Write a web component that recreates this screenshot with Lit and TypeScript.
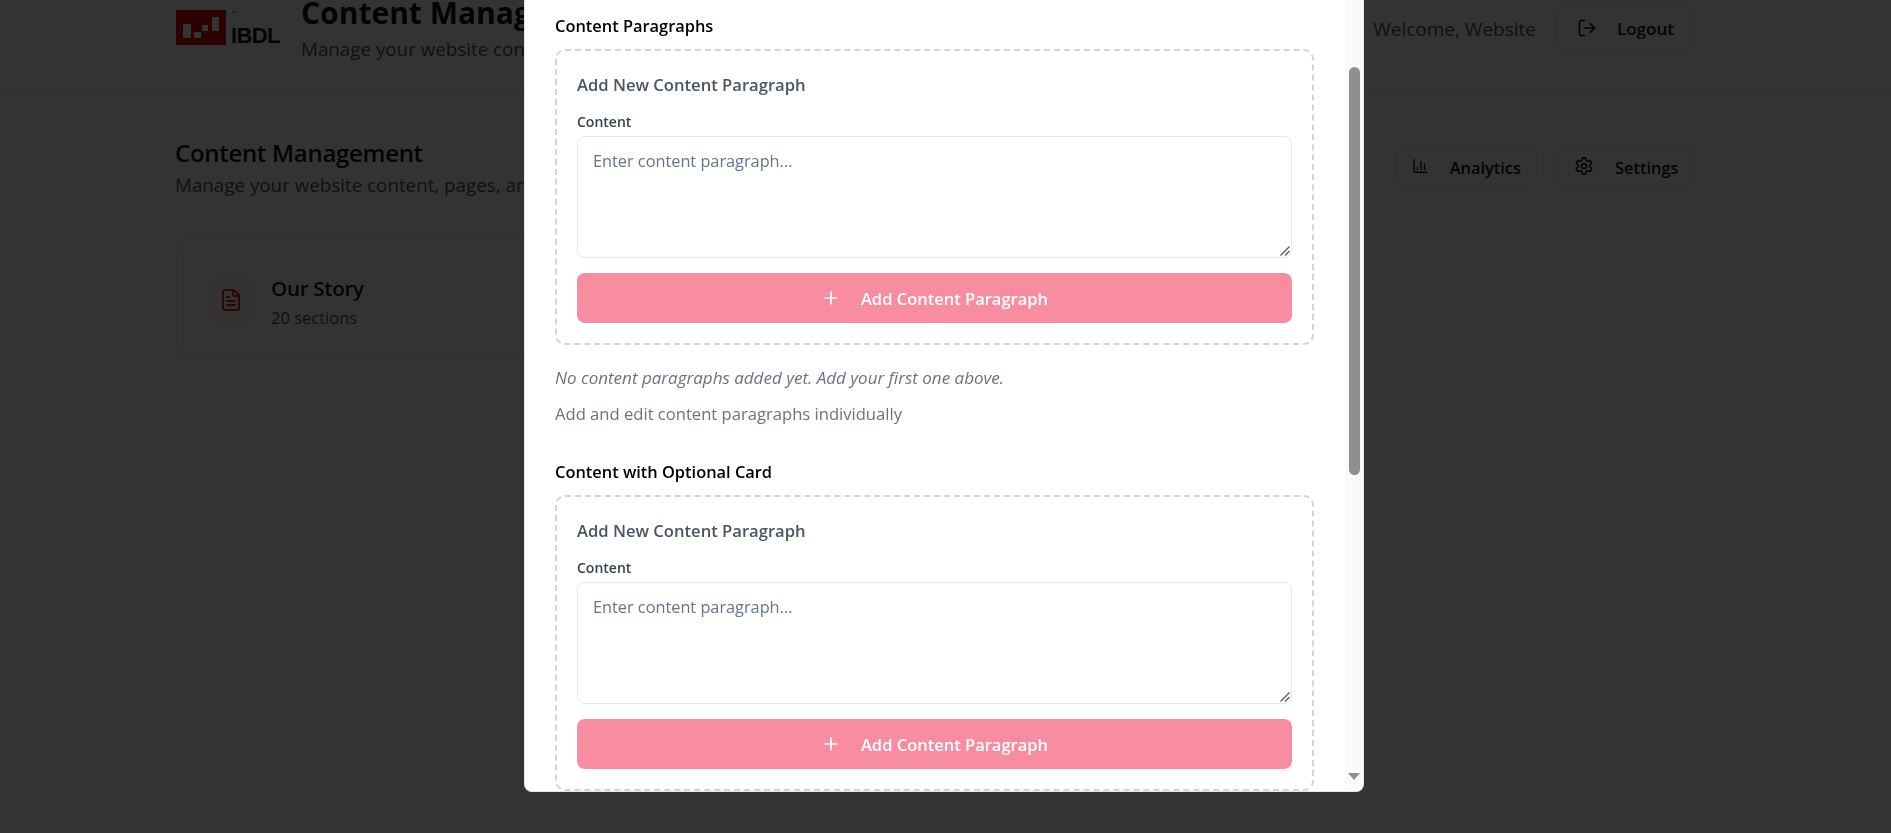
import { LitElement, html, css, svg } from 'lit';
import { customElement } from 'lit/decorators.js';

const icon = (body: unknown, size = 20) => html`<svg
  width=${size} height=${size} viewBox="0 0 24 24" fill="none" stroke="currentColor"
  stroke-width="2" stroke-linecap="round" stroke-linejoin="round">${body}</svg>`;

const logoutIcon = svg`<path d="M9 21H5a2 2 0 0 1-2-2V5a2 2 0 0 1 2-2h4"/><path d="M16 17l5-5-5-5"/><path d="M21 12H9"/>`;
const chartIcon = svg`<path d="M3 3v16a2 2 0 0 0 2 2h16"/><path d="M18 17V9"/><path d="M13 17V5"/><path d="M8 17v-3"/>`;
const gearIcon = svg`<path d="M12.22 2h-.44a2 2 0 0 0-2 2v.18a2 2 0 0 1-1 1.73l-.43.25a2 2 0 0 1-2 0l-.15-.08a2 2 0 0 0-2.73.73l-.22.38a2 2 0 0 0 .73 2.73l.15.1a2 2 0 0 1 1 1.72v.51a2 2 0 0 1-1 1.74l-.15.09a2 2 0 0 0-.73 2.73l.22.38a2 2 0 0 0 2.73.73l.15-.08a2 2 0 0 1 2 0l.43.25a2 2 0 0 1 1 1.73V20a2 2 0 0 0 2 2h.44a2 2 0 0 0 2-2v-.18a2 2 0 0 1 1-1.73l.43-.25a2 2 0 0 1 2 0l.15.08a2 2 0 0 0 2.73-.73l.22-.39a2 2 0 0 0-.73-2.73l-.15-.08a2 2 0 0 1-1-1.74v-.5a2 2 0 0 1 1-1.74l.15-.09a2 2 0 0 0 .73-2.73l-.22-.38a2 2 0 0 0-2.73-.73l-.15.08a2 2 0 0 1-2 0l-.43-.25a2 2 0 0 1-1-1.73V4a2 2 0 0 0-2-2z"/><circle cx="12" cy="12" r="3"/>`;
const fileIcon = svg`<path d="M15 2H6a2 2 0 0 0-2 2v16a2 2 0 0 0 2 2h12a2 2 0 0 0 2-2V7z"/><path d="M14 2v4a2 2 0 0 0 2 2h4"/><path d="M10 9H8"/><path d="M16 13H8"/><path d="M16 17H8"/>`;
const plusIcon = svg`<path d="M5 12h14"/><path d="M12 5v14"/>`;

@customElement('app-root')
export class AppRoot extends LitElement {
  static styles = css`
    :host {
      display: block;
      height: 833px;
      overflow: hidden;
      background: #fff;
      font-family: 'Open Sans', 'Noto Sans', sans-serif;
      color: #0f172a;
    }
    button { font: inherit; }

    /* page behind the dialog */
    .TopBar {
      height: 93px;
      box-sizing: border-box;
      border-bottom: 1px solid #e5e7eb;
      padding: 0 196px 0 176px;
      display: flex;
      justify-content: space-between;
      align-items: flex-start;
    }
    .brand { display: flex; gap: 21px; }
    .logo { display: flex; gap: 5px; margin-top: 10px; }
    .logoMark { display: block; }
    .logoWord { display: flex; flex-direction: column; justify-content: space-between; height: 37px; width: 49px; }
    .tm { font-size: 6px; line-height: 8px; margin-top: -1px; margin-left: 1px; color: #555; }
    .ibdl { font-size: 22px; line-height: 22px; font-weight: 700; letter-spacing: -0.6px; white-space: nowrap; font-family: 'Liberation Sans', sans-serif; }
    .titles { margin-top: -7px; }
    h1 { margin: 0; font-size: 30px; line-height: 40px; font-weight: 700; white-space: nowrap; }
    .sub { font-size: 18.8px; line-height: 28px; margin-top: 2px; color: #475569; white-space: nowrap; }
    .userBox { display: flex; align-items: center; gap: 20px; margin-top: 3px; }
    .welcome { font-size: 19px; padding-top: 2px; color: #475569; }
    .ghost {
      display: flex; align-items: center; gap: 21px;
      background: #fff; border: 1px solid #e5e7eb; border-radius: 10px;
      color: #0f172a; font-size: 16.4px; font-weight: 600; padding: 0 15px;
    }
    .ghost span { padding-top: 2px; }
    .logout { height: 49px; width: 139px; padding-left: 20px; gap: 20px; font-size: 17px; }
    .Main { padding: 44px 196px 0 175px; }
    .mainHead { display: flex; justify-content: space-between; align-items: flex-start; }
    h2 { margin: 0; font-size: 24px; line-height: 32px; font-weight: 600; letter-spacing: -0.3px; white-space: nowrap; }
    .mainSub { font-size: 18.8px; line-height: 28px; margin-top: 2px; color: #475569; white-space: nowrap; }
    .tools { display: flex; gap: 21px; margin-top: 7px; }
    .tools .ghost { height: 44px; }
    .tools .analytics { width: 141px; }
    .tools .settings { width: 137px; }
    .Card {
      margin-top: 40px; margin-left: 1px;
      width: 490px; height: 121px; box-sizing: border-box;
      border: 1px solid #e5e7eb; border-radius: 12px;
      display: flex; align-items: center; gap: 16px; padding-left: 30px;
    }
    .cardIcon {
      width: 48px; height: 48px; border-radius: 12px; background: #fef2f2;
      color: #dc2626; display: flex; align-items: center; justify-content: center;
    }
    .cardText { padding-top: 5px; }
    .cardTitle { font-size: 20.6px; line-height: 28px; font-weight: 600; letter-spacing: -0.3px; }
    .cardSub { font-size: 16.5px; line-height: 24px; margin-top: 4px; color: #475569; }

    /* dialog */
    .Overlay {
      position: fixed; inset: 0;
      background: rgba(0, 0, 0, 0.8);
    }
    .Dialog {
      position: absolute; left: 524px; top: 0;
      width: 840px; height: 792px; box-sizing: border-box;
      background: #fff;
      border: 1px solid #e5e7eb; border-top: 0;
      border-radius: 0 0 8px 8px;
      display: flex;
      overflow: hidden;
    }
    .body { flex: 1; padding: 0 31px 0 30px; min-width: 0; }
    .fieldTitle { font-size: 16.4px; line-height: 24px; font-weight: 600; color: #000; margin: 14px 0 11px; }
    .fieldTitle.next { margin-top: 34px; }
    .dashed {
      border: 2px dashed #d1d5db; border-radius: 10px;
      padding: 20px; height: 296px; box-sizing: border-box;
    }
    .addTitle { font-size: 16.6px; line-height: 28px; font-weight: 600; color: #4b5563; }
    .label { font-size: 14px; line-height: 20px; font-weight: 600; color: #374151; margin-top: 13px; }
    .areaWrap { position: relative; margin-top: 4px; }
    .area {
      display: block; width: 100%; height: 122px; box-sizing: border-box;
      padding: 12px 15px; resize: none;
      border: 1px solid #e2e8f0; border-radius: 8px; outline: none;
      font: 16.3px/24px 'Open Sans', 'Noto Sans', sans-serif;
      background: #fff;
    }
    .area::placeholder { color: #64748b; opacity: 1; }
    .grip { position: absolute; right: 2px; bottom: 2px; display: block; }
    .add {
      margin-top: 15px; width: 100%; height: 50px;
      border: 0; border-radius: 8px; background: #f88ca1; color: #fff;
      font-size: 16.5px; font-weight: 600;
      display: flex; align-items: center; justify-content: center; gap: 20px;
    }
    .empty { margin-top: 21px; font-size: 17px; line-height: 24px; font-style: italic; color: #6b7280; }
    .hint { margin-top: 12px; font-size: 16.6px; line-height: 24px; color: #6b7280; }

    .track {
      width: 18px; flex: none; background: #fafafa;
      display: flex; flex-direction: column; align-items: center;
    }
    .thumb { width: 11px; height: 408px; margin-top: 67px; border-radius: 6px; background: #8f8f8f; }
    .arrow {
      margin-top: auto; margin-bottom: 11px; width: 0; height: 0;
      border-left: 6.5px solid transparent; border-right: 6.5px solid transparent;
      border-top: 7px solid #8f8f8f;
    }
  `;

  private section(title: string, extra = '') {
    return html`
      <div class="fieldTitle ${extra}">${title}</div>
      <div class="dashed">
        <div class="addTitle">Add New Content Paragraph</div>
        <div class="label">Content</div>
        <div class="areaWrap">
          <textarea class="area" placeholder="Enter content paragraph..."></textarea>
          <svg class="grip" width="10" height="10" viewBox="0 0 10 10" fill="none" stroke="#555" stroke-width="1.2">
            <path d="M0.5 9.5L9.5 0.5"/>
            <path d="M5 9.5L9.5 5"/>
          </svg>
        </div>
        <button class="add">${icon(plusIcon, 20)}<span>Add Content Paragraph</span></button>
      </div>
    `;
  }

  render() {
    return html`
      <header class="TopBar">
        <div class="brand">
          <div class="logo">
            <svg class="logoMark" width="50" height="35" viewBox="0 0 50 35">
              <rect width="50" height="35" fill="#d80000"/>
              <rect x="7" y="14" width="8" height="14" fill="#fff"/>
              <rect x="18" y="22" width="7" height="6" fill="#fff"/>
              <rect x="26" y="15" width="6" height="6" fill="#fff"/>
              <rect x="36" y="7" width="7" height="14" fill="#fff"/>
            </svg>
            <div class="logoWord"><span class="tm">™</span><span class="ibdl">IBDL</span></div>
          </div>
          <div class="titles">
            <h1>Content Management</h1>
            <div class="sub">Manage your website content</div>
          </div>
        </div>
        <div class="userBox">
          <span class="welcome">Welcome, Website</span>
          <button class="ghost logout">${icon(logoutIcon)}<span>Logout</span></button>
        </div>
      </header>
      <main class="Main">
        <div class="mainHead">
          <div>
            <h2>Content Management</h2>
            <div class="mainSub">Manage your website content, pages, and more</div>
          </div>
          <div class="tools">
            <button class="ghost analytics">${icon(chartIcon)}<span>Analytics</span></button>
            <button class="ghost settings">${icon(gearIcon)}<span>Settings</span></button>
          </div>
        </div>
        <div class="Card">
          <div class="cardIcon">${icon(fileIcon, 24)}</div>
          <div class="cardText">
            <div class="cardTitle">Our Story</div>
            <div class="cardSub">20 sections</div>
          </div>
        </div>
      </main>
      <div class="Overlay">
        <div class="Dialog">
          <div class="body">
            ${this.section('Content Paragraphs')}
            <div class="empty">No content paragraphs added yet. Add your first one above.</div>
            <div class="hint">Add and edit content paragraphs individually</div>
            ${this.section('Content with Optional Card', 'next')}
          </div>
          <div class="track"><div class="thumb"></div><div class="arrow"></div></div>
        </div>
      </div>
    `;
  }
}
